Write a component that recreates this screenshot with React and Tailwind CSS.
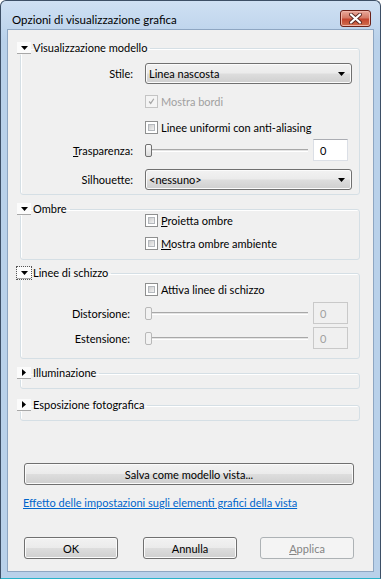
import React from "react";

const btnBg =
  "bg-[linear-gradient(#f2f2f2,#ebebeb_48%,#dddddd_52%,#cfcfcf)] shadow-[inset_0_0_0_1px_#fbfbfb]";

const Toggle = ({ open, focus }) => (
  <span
    className={`flex h-[12px] w-[14px] items-center justify-center border-b border-[#a8a8a8] bg-[#fbfbfb] ${
      focus ? "outline outline-1 outline-dotted outline-[#555]" : ""
    }`}
  >
    {open ? (
      <svg width="7" height="4" viewBox="0 0 7 4">
        <path d="M0 0h7L3.5 4z" fill="#000" />
      </svg>
    ) : (
      <svg width="4" height="7" viewBox="0 0 4 7">
        <path d="M0 0v7l4-3.5z" fill="#000" />
      </svg>
    )}
  </span>
);

const Group = ({ title, open, focus, className, children }) => (
  <fieldset
    className={`ml-[12px] w-[340px] rounded-[3px] border border-[#d5dfe5] shadow-[inset_1px_1px_0_#fff] ${className}`}
  >
    <legend className="-ml-[4px] flex h-[14px] items-center gap-[2px] pr-[3px] leading-[14px]">
      <Toggle open={open} focus={focus} />
      <span>{title}</span>
    </legend>
    {children}
  </fieldset>
);

const Check = ({ checked, disabled, label, className }) => (
  <div className={`ml-[124px] flex h-[13px] items-center ${className}`}>
    <span
      className={`flex h-[13px] w-[13px] items-center justify-center border p-[2px] ${
        disabled ? "border-[#c4c4c4] bg-[#f4f4f4]" : "border-[#8e8f8f] bg-white"
      }`}
    >
      {checked ? (
        <svg width="9" height="9" viewBox="0 0 9 9">
          <path d="M1.5 4.5l2 2.5 4-6" stroke="#a6a6a6" strokeWidth="1.6" fill="none" />
        </svg>
      ) : (
        <span className="h-full w-full border border-[#b4b8bd] bg-[linear-gradient(135deg,#cdcdcd,#f2f2f2)]" />
      )}
    </span>
    <span className={`ml-[3px] ${disabled ? "text-[#a0a0a0]" : ""}`}>{label}</span>
  </div>
);

const Select = ({ value }) => (
  <div
    className={`flex h-[21px] w-[207px] items-center justify-between rounded-[3px] border border-[#707070] pl-[3px] pr-[6px] ${btnBg}`}
  >
    <span>{value}</span>
    <svg width="7" height="4" viewBox="0 0 7 4">
      <path d="M0 0h7L3.5 4z" fill="#000" />
    </svg>
  </div>
);

const Slider = ({ disabled }) => (
  <div className="flex h-[22px] w-[166px] items-center">
    <span
      className={`relative z-10 h-[13px] w-[7px] rounded-[2px] border ${
        disabled ? "border-[#b8b8b8] bg-[#f2f2f2]" : "border-[#707070] bg-[linear-gradient(#fafafa,#dcdcdc)]"
      }`}
    />
    <span className="-ml-[4px] mr-[3px] h-[3px] flex-1 border-t border-[#a8a8a8] border-b border-b-white bg-[#e4e4e4]" />
  </div>
);

const NumBox = ({ disabled }) => (
  <div
    className={`ml-[2px] flex h-[22px] w-[35px] items-center border pl-[6px] ${
      disabled
        ? "border-[#c9c9c9] bg-[#f0f0f0] text-[#a0a0a0]"
        : "border-[#dbdfe6] border-t-[#abadb3] bg-white"
    }`}
  >
    0
  </div>
);

const Row = ({ label, labelW = "w-[112px]", className, children }) => (
  <div className={`flex items-center ${className}`}>
    <span className={`${labelW} text-right`}>{label}</span>
    <div className="ml-[12px] flex items-center">{children}</div>
  </div>
);

const Button = ({ children, disabled, className }) => (
  <div
    className={`flex h-[22px] items-center justify-center rounded-[3px] border ${
      disabled
        ? "border-[#adb2b5] bg-[#f4f4f4] text-[#838383]"
        : `border-[#707070] ${btnBg}`
    } ${className}`}
  >
    {children}
  </div>
);

const App = () => {
  return (
    <div className="flex h-[579px] w-[381px] flex-col overflow-hidden rounded-t-[6px] border border-[#3d4f66] border-b-[#2ab3c9] bg-[linear-gradient(#cfe0f3,#b9d1ea_40px)] font-['Lato',sans-serif] text-[11px] leading-[15px] text-black">
      <div className="flex h-[28px] items-start justify-between pl-[11px] pr-[9px] pt-[9px]">
        <span className="mt-[2px] text-[11.5px]">Opzioni di visualizzazione grafica</span>
        <div className="flex h-[17px] w-[31px] items-center justify-center rounded-[3px] border border-[#6b2219] bg-[linear-gradient(#eaa99b,#d47a66_45%,#c4452f_55%,#d0704f)] shadow-[inset_0_0_0_1px_#f0b5a8]">
          <svg width="13" height="11" viewBox="0 0 13 11">
            <path d="M2 1.5l9 8M11 1.5l-9 8" stroke="#5a2a24" strokeWidth="4" strokeLinecap="round" />
            <path d="M2 1.5l9 8M11 1.5l-9 8" stroke="#fff" strokeWidth="2.2" strokeLinecap="round" />
          </svg>
        </div>
      </div>

      <div className="mx-[6px] flex h-[543px] flex-col border border-[#8ea6c2] bg-[#f0f0f0]">
        <Group title="Visualizzazione modello" open className="mt-[11px] pb-[4px]">
          <Row label="Stile:" className="mt-[8px]">
            <Select value="Linea nascosta" />
          </Row>
          <Check checked disabled label="Mostra bordi" className="mt-[11px]" />
          <Check label="Linee uniformi con anti-aliasing" className="mt-[13px]" />
          <Row
            label={
              <>
                <span className="underline">T</span>rasparenza:
              </>
            }
            className="mt-[5px]"
          >
            <Slider />
            <NumBox />
          </Row>
          <Row label="Silhouette:" className="mt-[8px]">
            <Select value="<nessuno>" />
          </Row>
        </Group>

        <Group title="Ombre" open className="mt-[7px] pb-[9px]">
          <Check
            label={
              <>
                <span className="underline">P</span>roietta ombre
              </>
            }
            className="-mt-[2px]"
          />
          <Check
            label={
              <>
                <span className="underline">M</span>ostra ombre ambiente
              </>
            }
            className="mt-[10px]"
          />
        </Group>

        <Group title="Linee di schizzo" open focus className="mt-[6px] pb-[9px]">
          <Check label="Attiva linee di schizzo" className="mt-[3px]" />
          <Row label="Distorsione:" labelW="w-[109px] mr-[3px]" className="mt-[6px]">
            <Slider disabled />
            <NumBox disabled />
          </Row>
          <Row label="Estensione:" labelW="w-[109px] mr-[3px]" className="mt-[3px]">
            <Slider disabled />
            <NumBox disabled />
          </Row>
        </Group>

        <Group title="Illuminazione" className="mt-[7px] pb-[8px]" />
        <Group title="Esposizione fotografica" className="mt-[9px] pb-[8px]" />

        <Button className="ml-[16px] mt-[42px] w-[330px]">Salva come modello vista...</Button>

        <span className="ml-[15px] mt-[10px] w-fit text-[#0066cc] underline">
          Effetto delle impostazioni sugli elementi grafici della vista
        </span>

        <div className="ml-[16px] mt-[27px] flex">
          <Button className="w-[94px]">OK</Button>
          <Button className="ml-[25px] w-[94px]">Annulla</Button>
          <Button disabled className="ml-[23px] w-[94px]">
            <span className="underline">A</span>pplica
          </Button>
        </div>
      </div>
    </div>
  );
};

export default App;
